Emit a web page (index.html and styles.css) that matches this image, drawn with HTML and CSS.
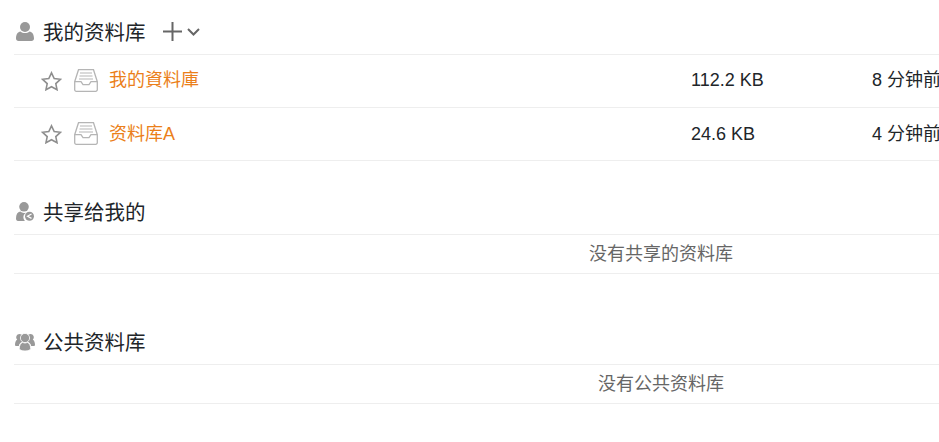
FILE: index.html
```html
<!DOCTYPE html>
<html lang="zh">
<head>
  <meta charset="UTF-8" />
  <title>我的资料库</title>
  <link rel="stylesheet" href="styles.css">
</head>
<body>

  <div class="lib-section lib-section-mine">
    <div class="section-head">
      <svg class="head-icon" viewBox="0 0 18 19"><circle cx="9" cy="5" r="5"/><path d="M0 16.500c0-4 1.800-6.700 4.500-7 1.200 1 2.800 1.500 4.500 1.500s3.300-.5 4.500-1.500c2.700.3 4.500 3 4.500 7 0 1.600-1 2.500-2.500 2.500h-13c-1.500 0-2.500-.9-2.500-2.500z"/></svg>
      <h3>我的资料库</h3>
      <div class="head-actions">
        <svg class="plus" viewBox="0 0 19 19"><path d="M9.500 0v19M0 9.500h19"/></svg>
        <svg class="caret" viewBox="0 0 13 8"><path d="M1 1l5.500 5.500 5.500-5.500"/></svg>
      </div>
    </div>
    <div class="lib-row">
      <svg class="star" viewBox="0 0 21 20"><path d="M10.500 1.800l2.700 5.700 6.200.8-4.600 4.300 1.200 6.100-5.500-3-5.500 3 1.200-6.100-4.600-4.300 6.200-.8z"/></svg>
      <svg class="tray" viewBox="0 0 24 23"><path d="M4.500 .7h15l3.800 12v8a1.600 1.600 0 0 1-1.600 1.600h-19.400a1.600 1.600 0 0 1-1.600-1.600v-8z"/><path d="M.7 12.700h6.300l2 3h6l2-3h6.300"/><path class="thin" d="M6 4h12M5.500 7h13M5 10h14"/></svg>
      <div class="lib-info">
        <a class="lib-name">我的資料庫</a>
        <span class="lib-size">112.2 KB</span>
        <span class="lib-time">8 分钟前</span>
      </div>
    </div>
    <div class="lib-row">
      <svg class="star" viewBox="0 0 21 20"><path d="M10.500 1.800l2.700 5.700 6.200.8-4.600 4.300 1.200 6.100-5.500-3-5.500 3 1.200-6.100-4.600-4.300 6.200-.8z"/></svg>
      <svg class="tray" viewBox="0 0 24 23"><path d="M4.500 .7h15l3.800 12v8a1.600 1.600 0 0 1-1.600 1.600h-19.400a1.600 1.600 0 0 1-1.600-1.600v-8z"/><path d="M.7 12.700h6.300l2 3h6l2-3h6.300"/><path class="thin" d="M6 4h12M5.500 7h13M5 10h14"/></svg>
      <div class="lib-info">
        <a class="lib-name">资料库A</a>
        <span class="lib-size">24.6 KB</span>
        <span class="lib-time">4 分钟前</span>
      </div>
    </div>
  </div>

  <div class="lib-section">
    <div class="section-head">
      <svg class="head-icon" viewBox="0 0 18 19"><circle cx="8" cy="4.800" r="4.800"/><path d="M0 16.500c0-4 1.600-6.500 4.200-6.900 1.100.9 2.400 1.400 3.800 1.400.9 0 1.800-.2 2.600-.6a5.200 5.200 0 0 0-1.600 8.600h-7c-1.300 0-2-.9-2-2.500z"/><circle cx="13.500" cy="14.200" r="4.500"/><path class="share" d="M15.500 12l-4 2.200 4 2.200"/></svg>
      <h3>共享给我的</h3>
    </div>
    <p class="empty-tip">没有共享的资料库</p>
  </div>

  <div class="lib-section lib-section-public">
    <div class="section-head">
      <svg class="head-icon wide" viewBox="0 0 20 18"><path d="M4.500 1a3.200 3.200 0 0 1 3 2v5.500c-1.800.6-3.300 2.300-3.700 4.500h-2.500c-.8 0-1.300-.5-1.300-1.300 0-2.700 1-4.500 2.200-5a3.300 3.300 0 0 1 2.300-5.700zM15.500 1a3.200 3.200 0 0 0-3 2v5.500c1.800.6 3.300 2.300 3.700 4.500h2.500c.8 0 1.300-.5 1.300-1.300 0-2.700-1-4.500-2.200-5a3.300 3.300 0 0 0-2.300-5.700z"/><g class="front"><circle cx="10" cy="5" r="4.600"/><path d="M4.300 15.500c0-3.200 1.500-5.800 3.500-6.200.6.500 1.300.7 2.200.7s1.600-.2 2.200-.7c2 .4 3.500 3 3.500 6.200 0 1.500-2.500 2.500-5.700 2.500s-5.700-1-5.700-2.500z"/></g></svg>
      <h3>公共资料库</h3>
    </div>
    <p class="empty-tip">没有公共资料库</p>
  </div>

</body>
</html>
```

FILE: styles.css
```css
html, body {
  height: 100%;
  overflow: hidden;
}

body {
  margin: 0;
  padding: 0 0 0 14px;
  background: #fff;
  color: #212529;
  font-family: "Liberation Sans", "Noto Sans CJK SC", sans-serif;
  font-size: 18px;
}

.lib-section {
  width: 1294px;
  margin-top: 26px;
}

.lib-section-mine {
  margin-top: 0;
}

.lib-section-public {
  margin-top: 43px;
}

.section-head {
  display: flex;
  align-items: center;
  height: 48px;
  padding-top: 1px;
  box-sizing: border-box;
  border-bottom: 1px solid #eee;
}

.lib-section-mine .section-head {
  height: 55px;
  padding-top: 8px;
}

.section-head h3 {
  margin: 0;
  font-size: 20.500px;
  font-weight: 400;
  color: #212529;
}

.head-icon {
  width: 18px;
  height: 19px;
  margin: 0 9px 0 2px;
  fill: #999;
  flex: none;
}

.head-icon.wide {
  width: 20px;
  height: 18px;
  margin: 2px 8px 0 1px;
}

.front {
  stroke: #fff;
  stroke-width: 0.800;
}

.share {
  fill: none;
  stroke: #fff;
  stroke-width: 1.200;
}

.head-actions {
  display: flex;
  align-items: center;
  margin-left: 17px;
}

.plus {
  width: 19px;
  height: 19px;
  fill: none;
  stroke: #666;
  stroke-width: 2;
}

.caret {
  width: 13px;
  height: 8px;
  margin: 2px 0 0 5px;
  fill: none;
  stroke: #666;
  stroke-width: 2;
}

.lib-row {
  display: flex;
  align-items: center;
  height: 53px;
  box-sizing: border-box;
  border-bottom: 1px solid #eee;
}

.star {
  width: 21px;
  height: 20px;
  margin: -1px 0 0 27px;
  fill: none;
  stroke: #8e8e8e;
  stroke-width: 1.600;
  flex: none;
}

.tray {
  width: 24px;
  height: 23px;
  margin: -1px 0 0 12px;
  fill: none;
  stroke: #b5b5b5;
  stroke-width: 1.300;
  flex: none;
}

.tray .thin {
  stroke-width: 1;
}

.lib-info {
  display: flex;
  align-items: baseline;
  height: 26px;
  line-height: 24px;
}

.lib-row + .lib-row .lib-info {
  margin-top: 2px;
}

.lib-name {
  width: 582px;
  margin-left: 11px;
  color: #eb7f1a;
  flex: none;
}

.lib-size {
  width: 181px;
  flex: none;
}

.lib-time {
  flex: none;
}

.empty-tip {
  height: 39px;
  margin: 0;
  line-height: 39px;
  box-sizing: border-box;
  border-bottom: 1px solid #eee;
  text-align: center;
  color: #666;
}
```
